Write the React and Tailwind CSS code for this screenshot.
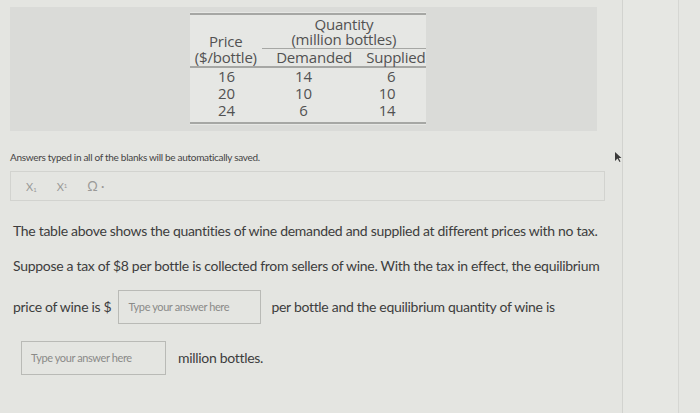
import React from "react";

const rows = [
  ["16", "14", "6"],
  ["20", "10", "10"],
  ["24", "6", "14"],
];

const WineTable = () => (
  <div className="w-[236px] self-start mt-[5px] pb-[1px] bg-[#e6e7e4] text-[#525252] text-[15px] leading-[15px] font-['Open_Sans',sans-serif] tracking-[-0.2px]">
    <div className="border-t-2 border-[#a6a7a4] mt-[1px]" />
    <div className="flex">
      <div className="w-[74px] flex flex-col items-center justify-end">
        <div className="mb-[1px]">Price</div>
        <div className="whitespace-nowrap">($/bottle)</div>
      </div>
      <div className="flex-1 flex flex-col">
        <div className="text-center pt-[2px]">Quantity</div>
        <div className="text-center">(million bottles)</div>
        <div className="border-t border-[#a6a7a4] mt-[1px] mb-[1px]" />
        <div className="flex">
          <div className="w-[104px] text-center">Demanded</div>
          <div className="flex-1 text-center">Supplied</div>
        </div>
      </div>
    </div>
    <div className="border-t-2 border-[#a6a7a4] mt-[1px]" />
    <div className="pb-[3px] leading-[17px]">
      {rows.map((r) => (
        <div key={r[0]} className="flex">
          <div className="w-[74px] text-center">{r[0]}</div>
          <div className="w-[80px] text-center">{r[1]}</div>
          <div className="w-[52px] text-right">{r[2]}</div>
        </div>
      ))}
    </div>
    <div className="border-t-2 border-[#a6a7a4]" />
  </div>
);

export default function App() {
  return (
    <div className="w-[700px] h-[413px] bg-[#e4e5e1] flex overflow-hidden relative text-[#3d3d3d] font-['Lato',sans-serif]">
      <div className="w-[622px] shrink-0 pl-[10px] pr-[17px]">
        <div className="mt-[7px] h-[124px] w-[587px] bg-[#dadbd8] flex justify-center pl-[8px]">
          <WineTable />
        </div>
        <div className="mt-[20px] text-[10px] leading-[12px] tracking-[-0.3px] text-[#444]">
          Answers typed in all of the blanks will be automatically saved.
        </div>
        <div className="mt-[8px] h-[30px] w-[595px] border border-[#d2d3cf] flex items-center gap-[20px] pl-[15px] text-[#9a9a98] text-[11px]">
          <span className="leading-none">
            X<sub className="text-[6px]">1</sub>
          </span>
          <span className="leading-none">
            X<sup className="text-[6px]">1</sup>
          </span>
          <span className="text-[13px] leading-none">Ω ·</span>
        </div>
        <div className="pl-[3px] text-[14px] leading-[20px] tracking-[-0.3px]">
          <p className="mt-[20px]">
            The table above shows the quantities of wine demanded and supplied at different prices with no tax.
          </p>
          <p className="mt-[15px]">
            Suppose a tax of $8 per bottle is collected from sellers of wine. With the tax in effect, the equilibrium
          </p>
          <div className="mt-[14px] flex items-center">
            <span>price of wine is $</span>
            <div className="ml-[7px] w-[143px] h-[34px] border border-[#b9bab6] flex items-center pl-[9px] text-[11px] text-[#8a8a88] tracking-[-0.4px]">
              Type your answer here
            </div>
            <span className="ml-[10px]">per bottle and the equilibrium quantity of wine is</span>
          </div>
          <div className="mt-[17px] flex items-center pl-[8px]">
            <div className="w-[145px] h-[34px] border border-[#b9bab6] flex items-center pl-[9px] text-[11px] text-[#8a8a88] tracking-[-0.4px]">
              Type your answer here
            </div>
            <span className="ml-[12px]">million bottles.</span>
          </div>
        </div>
      </div>
      <div className="w-[56px] shrink-0 border-l border-[#d2d3cf] bg-[#e6e7e3]" />
      <div className="flex-1 border-l border-[#d6d7d3] bg-[#e5e6e2]" />
      <svg className="absolute left-[614px] top-[151px]" width="8" height="12" viewBox="0 0 8 12">
        <path d="M1 1 L1 10 L3.5 7.5 L5.5 11 L6.5 10.5 L4.7 7 L7.5 7 Z" fill="#3a3a3a" />
      </svg>
    </div>
  );
}
